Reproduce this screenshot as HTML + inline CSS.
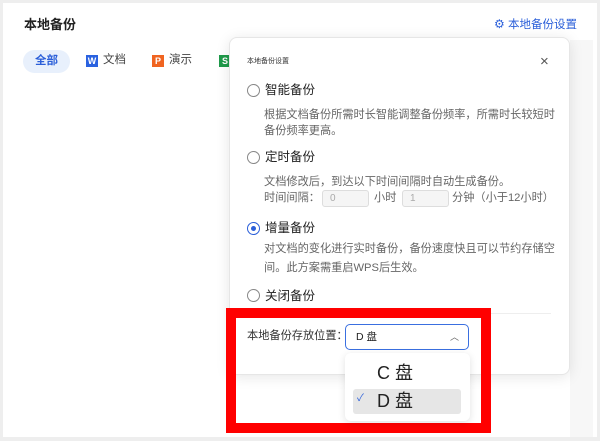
<!DOCTYPE html>
<html><head><meta charset="utf-8"><style>
*{margin:0;padding:0;box-sizing:border-box}
body{width:600px;height:441px;background:#eeeeee;position:relative;overflow:hidden;font-family:"Liberation Sans","Noto Sans CJK SC",sans-serif;color:#222}
.a{position:absolute;white-space:nowrap;line-height:1.2}
.panel{left:3px;top:3px;width:594px;height:434px;background:#fff}
.modal{left:229px;top:37px;width:341px;height:338px;background:#fff;border:1px solid #e6e6e6;border-radius:8px;box-shadow:0 2px 14px rgba(0,0,0,.10)}
.radio{width:13px;height:13px;border:1px solid #888;border-radius:50%}
.lbl{font-size:12.5px;color:#222}
.desc{font-size:11.2px;color:#666}
.inp{height:17px;border:1px solid #ddd;border-radius:3px;background:#f5f5f5;font-size:10px;color:#aaa;padding-left:7px;line-height:15px}
</style></head><body>
<div class="a panel"></div>
<div class="a" style="left:24px;top:17px;font-size:13px;font-weight:bold;color:#222">本地备份</div>
<div class="a" style="left:494px;top:17px;font-size:11.5px;color:#2b5fd9"><span style="font-size:12px">⚙</span> 本地备份设置</div>
<div class="a" style="left:23px;top:50px;width:47px;height:23px;border-radius:12px;background:#e8f0fc;color:#2b5fd9;font-size:11.5px;font-weight:bold;text-align:center;line-height:23px">全部</div>
<div class="a" style="left:86px;top:55px;width:12px;height:12px;background:#2a62e0;color:#fff;font-size:9px;font-weight:bold;text-align:center;line-height:12px">W</div>
<div class="a" style="left:103px;top:54px;font-size:11.5px;color:#444">文档</div>
<div class="a" style="left:152px;top:55px;width:12px;height:12px;background:#f06420;color:#fff;font-size:9px;font-weight:bold;text-align:center;line-height:12px">P</div>
<div class="a" style="left:169px;top:54px;font-size:11.5px;color:#444">演示</div>
<div class="a" style="left:219px;top:55px;width:12px;height:12px;background:#1f9a4a;color:#fff;font-size:9px;font-weight:bold;text-align:center;line-height:12px">S</div>
<div class="a" style="left:560px;top:50px;width:16px;height:24px;border:1px solid #ddd;border-left:none;border-radius:0 5px 5px 0"></div>
<div class="a" style="left:570px;top:40px;width:23px;height:397px;background:#f7f7f7"></div>
<div class="a modal"></div>
<div class="a" style="left:247px;top:58px;font-size:7px;color:#333">本地备份设置</div>
<div class="a" style="left:540px;top:53px;font-size:15px;color:#555">×</div>
<div class="a radio" style="left:247px;top:84px"></div>
<div class="a lbl" style="left:265px;top:83px">智能备份</div>
<div class="a desc" style="left:264px;top:109px">根据文档备份所需时长智能调整备份频率，所需时长较短时</div>
<div class="a desc" style="left:264px;top:125px">备份频率更高。</div>
<div class="a radio" style="left:247px;top:151px"></div>
<div class="a lbl" style="left:265px;top:150px">定时备份</div>
<div class="a desc" style="left:264px;top:176px">文档修改后，到达以下时间间隔时自动生成备份。</div>
<div class="a desc" style="left:264px;top:192px">时间间隔：</div>
<div class="a inp" style="left:322px;top:190px;width:47px">0</div>
<div class="a desc" style="left:374px;top:192px">小时</div>
<div class="a inp" style="left:402px;top:190px;width:47px">1</div>
<div class="a desc" style="left:452px;top:192px">分钟（小于12小时）</div>
<div class="a radio" style="left:247px;top:222px;border-color:#2b5fd9"><div style="position:absolute;left:3px;top:3px;width:5px;height:5px;border-radius:50%;background:#2b5fd9"></div></div>
<div class="a lbl" style="left:265px;top:221px">增量备份</div>
<div class="a desc" style="left:264px;top:243px">对文档的变化进行实时备份，备份速度快且可以节约存储空</div>
<div class="a desc" style="left:264px;top:262px">间。此方案需重启WPS后生效。</div>
<div class="a radio" style="left:247px;top:289px"></div>
<div class="a lbl" style="left:265px;top:289px">关闭备份</div>
<div class="a" style="left:247px;top:313px;width:304px;height:1px;background:#eee"></div>
<div class="a" style="left:226px;top:308px;width:265px;height:125px;border:10px solid #ff0000"></div>
<div class="a" style="left:247px;top:330px;font-size:11.2px;color:#333">本地备份存放位置：</div>
<div class="a" style="left:345px;top:324px;width:124px;height:26px;border:1px solid #3a6fe0;border-radius:5px;font-size:10.5px;padding-left:10px;line-height:24px;color:#222">D 盘<span style="position:absolute;right:9px;top:0;color:#666;font-size:9px">︿</span></div>
<div class="a" style="left:345px;top:353px;width:125px;height:68px;background:#fff;border-radius:6px;box-shadow:0 2px 8px rgba(0,0,0,.12)"></div>
<div class="a" style="left:377px;top:363px;font-size:18px;color:#222">C 盘</div>
<div class="a" style="left:353px;top:389px;width:108px;height:25px;background:#e6e6e6;border-radius:3px"></div>
<div class="a" style="left:357px;top:393px;font-size:10px;color:#2b5fd9">✓</div>
<div class="a" style="left:377px;top:391px;font-size:18px;color:#222">D 盘</div>
</body></html>
